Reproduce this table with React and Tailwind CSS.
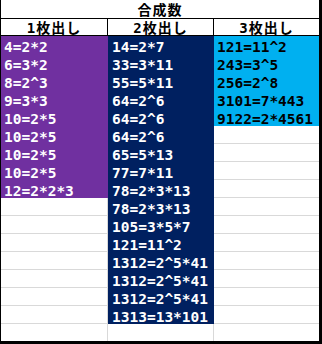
const col1 = ["4=2*2", "6=3*2", "8=2^3", "9=3*3", "10=2*5", "10=2*5", "10=2*5", "10=2*5", "12=2*2*3"];
const col2 = [
  "14=2*7", "33=3*11", "55=5*11", "64=2^6", "64=2^6", "64=2^6", "65=5*13", "77=7*11",
  "78=2*3*13", "78=2*3*13", "105=3*5*7", "121=11^2", "1312=2^5*41", "1312=2^5*41", "1312=2^5*41", "1313=13*101",
];
const col3 = ["121=11^2", "243=3^5", "256=2^8", "3101=7*443", "9122=2*4561"];

const ROWS = 17;
const font = { fontFamily: '"DejaVu Sans Mono", "Noto Sans CJK JP", monospace' };

function Column({ items, width, fill, text, pad, last }) {
  const rows = Array.from({ length: ROWS }, (_, i) => items[i]);
  return (
    <div className={`flex flex-col ${width}`}>
      {rows.map((v, i) => {
        const filled = v !== undefined;
        const isLast = i === ROWS - 1;
        return (
          <div
            key={i}
            className={`${isLast ? "h-[17px]" : "h-[18px] border-b"} ${last ? "" : "border-r"} ${
              filled ? `${fill} ${text}` : "bg-white border-[#d9d9d9]"
            } ${pad} pt-[4px] text-[14.5px] font-bold leading-[14px] whitespace-nowrap`}
          >
            {v}
          </div>
        );
      })}
    </div>
  );
}

export default function App() {
  return (
    <div
      className="w-[322px] h-[344px] bg-white border-l border-r-[3px] border-b-[3px] border-black overflow-hidden"
      style={font}
    >
      <div className="h-[19px] border-b border-black text-center text-[14px] tracking-[1px] font-bold text-black leading-[14px] pt-[3px]">
        合成数
      </div>
      <div className="flex h-[17px] border-b border-black text-[14px] tracking-[1px] font-bold text-black leading-[14px]">
        <div className="w-[107px] border-r border-black text-center pt-[2px]">1枚出し</div>
        <div className="w-[106px] border-r border-black text-center pt-[2px]">2枚出し</div>
        <div className="flex-1 text-center pt-[2px]">3枚出し</div>
      </div>
      <div className="flex">
        <Column items={col1} width="w-[107px]" fill="bg-[#7030a0] border-[#7030a0]" text="text-white" pad="pl-[3px]" />
        <Column items={col2} width="w-[106px]" fill="bg-[#002060] border-[#002060]" text="text-white" pad="pl-[4px]" />
        <Column items={col3} width="flex-1" fill="bg-[#00b0f0] border-[#00b0f0]" text="text-black" pad="pl-[3px]" last />
      </div>
    </div>
  );
}
